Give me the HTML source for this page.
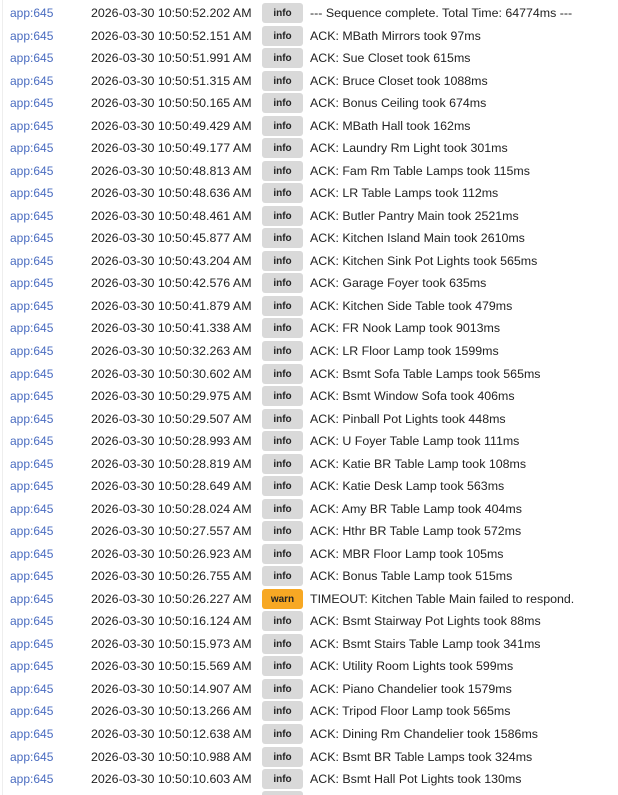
<!DOCTYPE html><html style="overflow:hidden;height:795px"><head><style>
body{margin:0;width:618px;height:795px;background:#fff;overflow:hidden;font-family:"Liberation Sans",sans-serif;position:relative}
.r{position:absolute;left:0;width:618px;height:22px}
.a{position:absolute;left:10px;top:4px;font-size:12px;color:#4a6cc0}
.d{position:absolute;left:91px;top:4px;font-size:12.4px;color:#222}
.b{display:block;position:absolute;left:262px;top:1px;width:41px;height:20px;border-radius:3px;background:#d9d9d9;font-size:10px;font-weight:bold;text-align:center;line-height:21px;color:#222}
.w{background:#f7a824}
.m{position:absolute;left:310px;top:4px;font-size:12.4px;color:#222;white-space:nowrap}
.lb{position:absolute;left:2px;top:0;width:1px;height:795px;background:#eee}
</style></head><body><div class="lb"></div>
<script>
var rows=[["52.202","--- Sequence complete. Total Time: 64774ms ---"],["52.151","ACK: MBath Mirrors took 97ms"],["51.991","ACK: Sue Closet took 615ms"],["51.315","ACK: Bruce Closet took 1088ms"],["50.165","ACK: Bonus Ceiling took 674ms"],["49.429","ACK: MBath Hall took 162ms"],["49.177","ACK: Laundry Rm Light took 301ms"],["48.813","ACK: Fam Rm Table Lamps took 115ms"],["48.636","ACK: LR Table Lamps took 112ms"],["48.461","ACK: Butler Pantry Main took 2521ms"],["45.877","ACK: Kitchen Island Main took 2610ms"],["43.204","ACK: Kitchen Sink Pot Lights took 565ms"],["42.576","ACK: Garage Foyer took 635ms"],["41.879","ACK: Kitchen Side Table took 479ms"],["41.338","ACK: FR Nook Lamp took 9013ms"],["32.263","ACK: LR Floor Lamp took 1599ms"],["30.602","ACK: Bsmt Sofa Table Lamps took 565ms"],["29.975","ACK: Bsmt Window Sofa took 406ms"],["29.507","ACK: Pinball Pot Lights took 448ms"],["28.993","ACK: U Foyer Table Lamp took 111ms"],["28.819","ACK: Katie BR Table Lamp took 108ms"],["28.649","ACK: Katie Desk Lamp took 563ms"],["28.024","ACK: Amy BR Table Lamp took 404ms"],["27.557","ACK: Hthr BR Table Lamp took 572ms"],["26.923","ACK: MBR Floor Lamp took 105ms"],["26.755","ACK: Bonus Table Lamp took 515ms"],["26.227","TIMEOUT: Kitchen Table Main failed to respond.",1],["16.124","ACK: Bsmt Stairway Pot Lights took 88ms"],["15.973","ACK: Bsmt Stairs Table Lamp took 341ms"],["15.569","ACK: Utility Room Lights took 599ms"],["14.907","ACK: Piano Chandelier took 1579ms"],["13.266","ACK: Tripod Floor Lamp took 565ms"],["12.638","ACK: Dining Rm Chandelier took 1586ms"],["10.988","ACK: Bsmt BR Table Lamps took 324ms"],["10.603","ACK: Bsmt Hall Pot Lights took 130ms"]];
var h="";rows.forEach(function(r,i){var t=(2+i*22.53).toFixed(1);
h+='<div class="r" style="top:'+t+'px"><span class="a">app:645</span><span class="d">2026-03-30 10:50:'+r[0]+' AM</span><span class="b'+(r[2]?' w':'')+'">'+(r[2]?'warn':'info')+'</span><span class="m">'+r[1]+'</span></div>';});
h+='<div style="position:absolute;left:262px;top:791px;width:41px;height:4px;background:#d9d9d9;border-radius:3px 3px 0 0"></div>';
document.write(h);
</script></body></html>
